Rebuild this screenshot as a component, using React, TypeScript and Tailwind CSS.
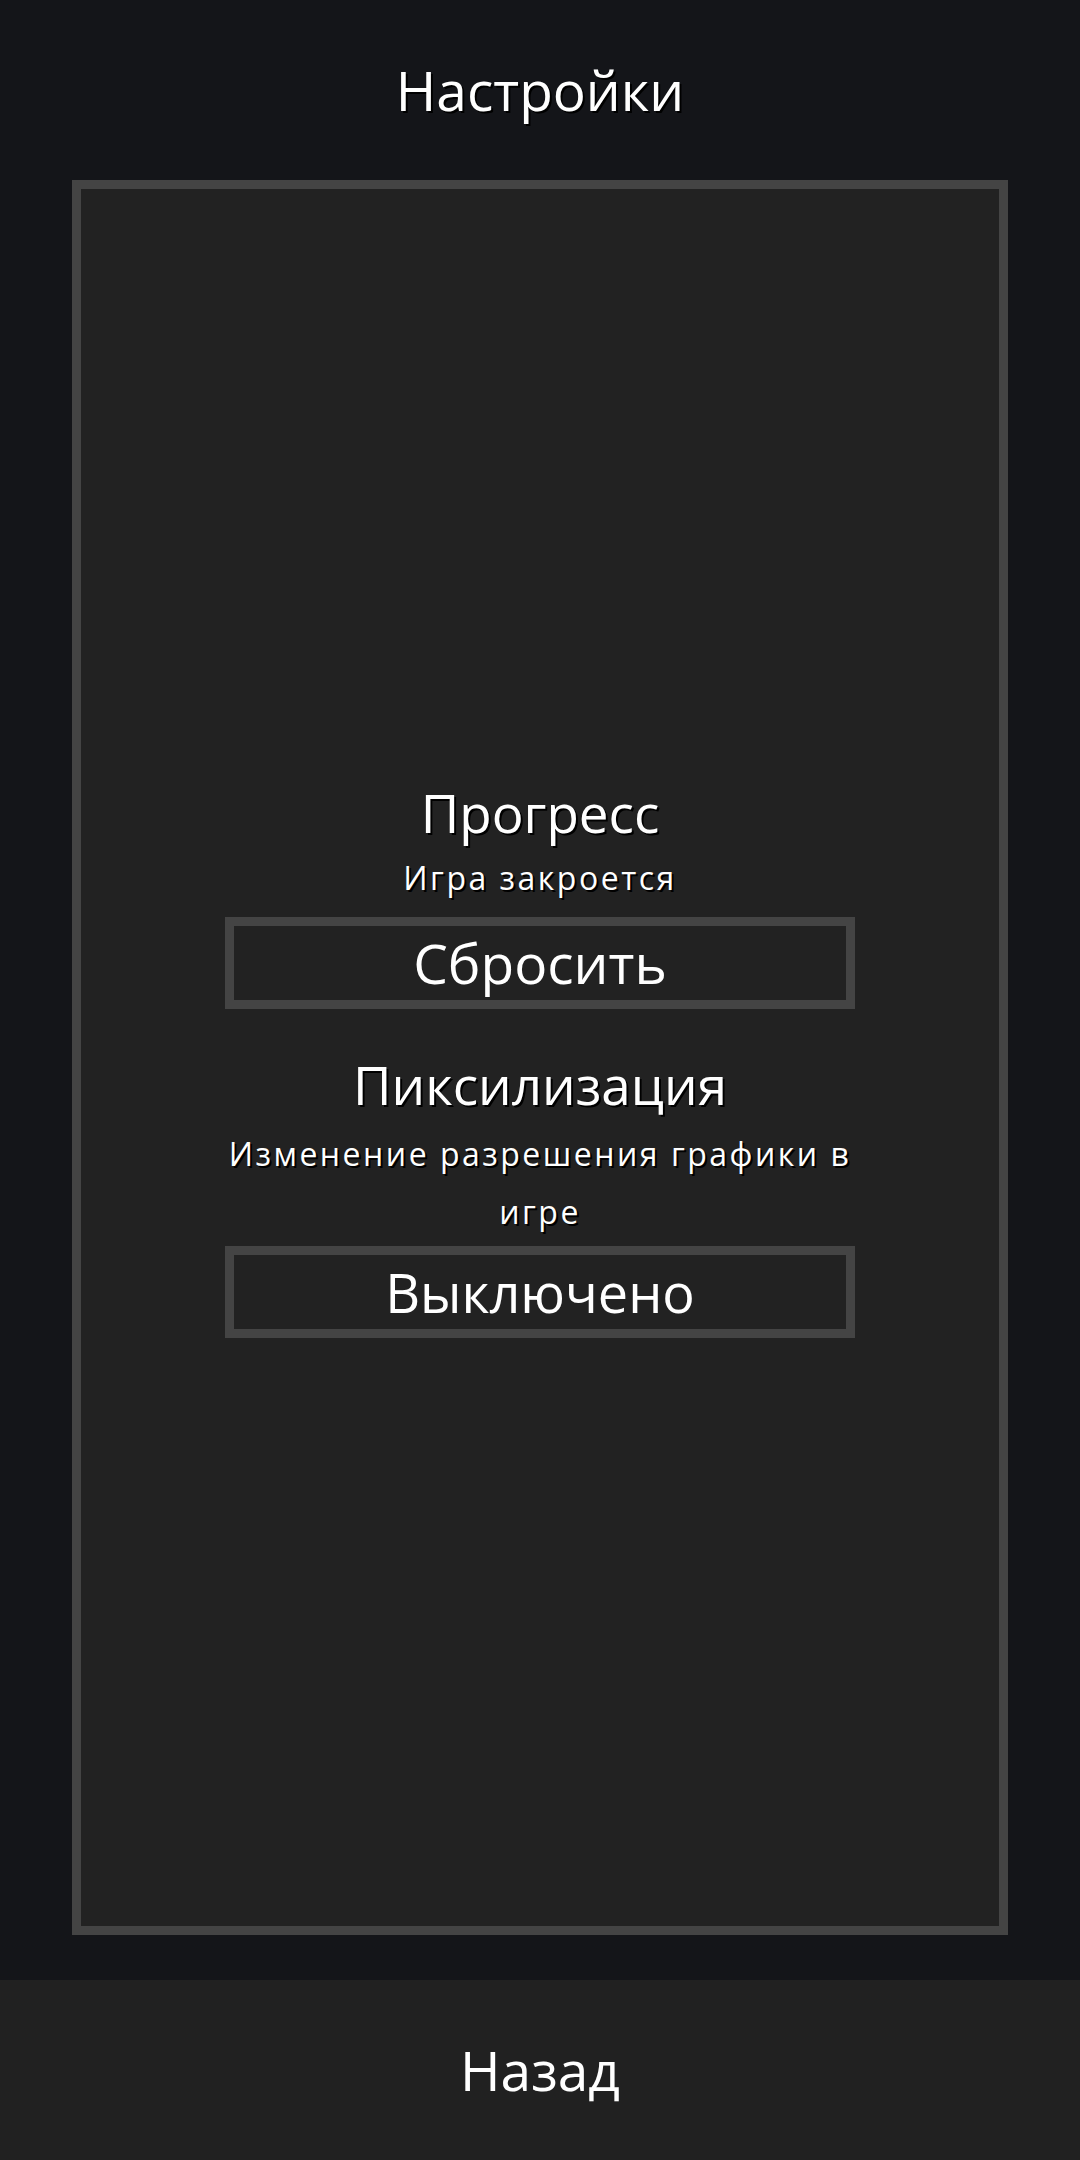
import React from "react";

export default function App() {
  const font = { fontFamily: '"Open Sans", "Noto Sans", sans-serif' };
  return (
    <div
      className="w-[1080px] h-[2160px] bg-[#141519] flex flex-col text-white"
      style={font}
    >
      <header className="h-[180px] flex items-center justify-center">
        <h1 className="text-[55px] leading-[76px] [text-shadow:2px_2px_0_#000]">Настройки</h1>
      </header>
      <main className="mx-[72px] h-[1755px] border-[9px] border-[#444444] bg-[#222222] flex flex-col items-center justify-center">
        <section className="w-[630px] flex flex-col items-center text-center">
          <h2 className="text-[53px] leading-[72px] [text-shadow:2px_2px_0_#000]">Прогресс</h2>
          <p className="text-[32px] leading-[58px] tracking-[2.5px] [text-shadow:2px_2px_0_#000]">Игра закроется</p>
          <button className="mt-[10px] w-[630px] h-[92px] border-[9px] border-[#444444] bg-[#222222] text-[55px] leading-[74px] text-white">
            Сбросить
          </button>
        </section>
        <section className="mt-[40px] w-[630px] flex flex-col items-center text-center">
          <h2 className="text-[53px] leading-[72px] [text-shadow:2px_2px_0_#000]">Пиксилизация</h2>
          <p className="mt-[4px] text-[32px] leading-[58px] tracking-[2.5px] [text-shadow:2px_2px_0_#000]">
            Изменение разрешения графики в игре
          </p>
          <button className="mt-[5px] w-[630px] h-[92px] border-[9px] border-[#444444] bg-[#222222] text-[54px] leading-[74px] text-white">
            Выключено
          </button>
        </section>
      </main>
      <div className="mt-[45px] h-[180px] bg-[#212121] flex items-center justify-center">
        <span className="text-[55px] leading-[76px]">Назад</span>
      </div>
    </div>
  );
}
